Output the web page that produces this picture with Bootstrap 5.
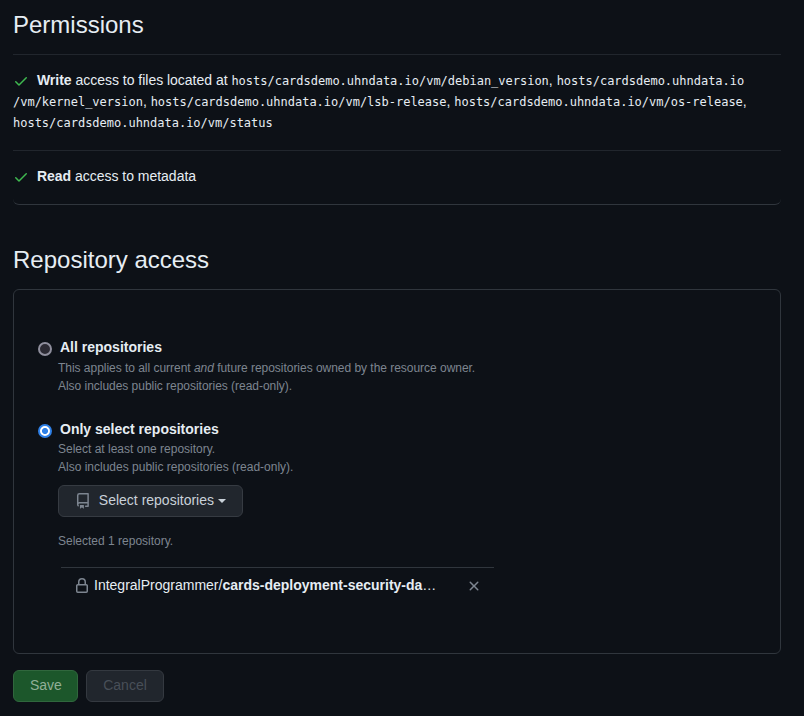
<!DOCTYPE html>
<html lang="en" data-bs-theme="dark">
<head>
<meta charset="utf-8">
<meta name="viewport" content="width=device-width, initial-scale=1">
<title>Permissions</title>
<link href="https://cdn.jsdelivr.net/npm/bootstrap@5.3.0/dist/css/bootstrap.min.css" rel="stylesheet">
<style>
  body { background: #0d1117; color: #e6edf3; font: 14px/21px "Liberation Sans", Arial, sans-serif; overflow: hidden; }
  .page { width: 768px; margin-left: 13px; padding-top: 7px; }
  .page h2 { font-size: 24px; line-height: 36px; font-weight: 400; margin: 0; color: #e6edf3; }
  .perm-list { margin-top: 11px; border-bottom: 1px solid #30363d; border-radius: 0 0 6px 6px; }
  .perm-item { border-top: 1px solid #21262d; padding: 15px 0 17px; }
  .perm-item code { font: 12px/12px "DejaVu Sans Mono", monospace; letter-spacing: -.01px; color: #e6edf3; }
  .perm-item svg { fill: #3fb950; margin: -2px 4px -2px 0; vertical-align: -2px; }
  .perm-item b, .choice-label, .repo-row b { font-weight: 700; }
  .perm-item b + span { letter-spacing: -.02px; }
  .access-heading { padding-top: 37px; }
  .access-box { height: 365px; margin-top: 11px; border: 1px solid #30363d; border-radius: 6px; padding: 47px 24px 0; }
  .choice .form-check-input { width: 14px; height: 14px; margin: 5px 8px 0 0; float: none; flex: none; background: #2b2a33; border: 2px solid #8f8f9d; box-shadow: none; }
  .choice .form-check-input:checked { border-color: #2f81e8; background: radial-gradient(circle, #2f81e8 0 2.7px, #fff 3.3px); }
  .note { color: #7d8590; font-size: 12px; line-height: 18px; margin: 0; }
  .note-scope { letter-spacing: -.03px; }
  .choice-body { padding-left: 20px; }
  .choice:first-child .choice-body { padding-top: 1px; }
  .choice + .choice { margin-top: 24px; }
  .btn.act { font-size: 14px; line-height: 20px; height: 32px; border-radius: 6px; padding: 4px 16px 6px; --bs-btn-disabled-opacity: 1; }
  .btn-pick { width: 185px; color: #c9d1d9; background: #21262d; border-color: #363b42; margin: 9px 0 15px; }
  .btn-pick::after { margin: 2px 0 0 4px; border-top-width: 4px; border-right-width: 4px; border-left-width: 4px; vertical-align: 0; }
  .btn-pick svg { fill: #7d8590; margin: 2px 8px 0 0; }
  .repo-list { width: 433px; margin: 17px 0 0 3px; border-top: 1px solid #30363d; padding: 7px 12px 0 13px; }
  .repo-row { height: 21px; }
  .repo-row svg { fill: #7d8590; flex: none; }
  .repo-name { width: 342px; margin-left: 4px; }
  .btn-save.act:disabled { width: 65px; background: #1c572b; border-color: #30673d; color: #91af97; }
  .btn-cancel.act:disabled { width: 78px; background: #21262d; border-color: #343940; color: #484f58; }
</style>
<script src="https://cdn.jsdelivr.net/npm/bootstrap@5.3.0/dist/js/bootstrap.bundle.min.js"></script>
</head>
<body>
<main class="page">
  <h2>Permissions</h2>
  <ul class="perm-list list-unstyled mb-0">
    <li class="perm-item"><svg width="16" height="16" viewBox="0 0 16 16"><path d="M13.78 4.22a.75.75 0 0 1 0 1.06l-7.25 7.25a.75.75 0 0 1-1.06 0L2.22 9.28a.75.75 0 0 1 1.06-1.06L6 10.94l6.72-6.72a.75.75 0 0 1 1.06 0Z"/></svg> <b>Write</b><span> access to files located at </span><code>hosts/cardsdemo.uhndata.io/vm/debian_version</code>, <code>hosts/cardsdemo.uhndata.io<br>/vm/kernel_version</code>, <code>hosts/cardsdemo.uhndata.io/vm/lsb-release</code>, <code>hosts/cardsdemo.uhndata.io/vm/os-release</code>,<br><code>hosts/cardsdemo.uhndata.io/vm/status</code></li>
    <li class="perm-item"><svg width="16" height="16" viewBox="0 0 16 16"><path d="M13.78 4.22a.75.75 0 0 1 0 1.06l-7.25 7.25a.75.75 0 0 1-1.06 0L2.22 9.28a.75.75 0 0 1 1.06-1.06L6 10.94l6.72-6.72a.75.75 0 0 1 1.06 0Z"/></svg> <b>Read</b><span> access to metadata</span></li>
  </ul>

  <h2 class="access-heading">Repository access</h2>
  <section class="access-box">
    <div class="choice">
      <div class="d-flex">
        <input class="form-check-input" type="radio" name="scope" id="scope-all">
        <label class="choice-label" for="scope-all">All repositories</label>
      </div>
      <div class="choice-body">
        <p class="note note-scope">This applies to all current <em>and</em> future repositories owned by the resource owner.<br>Also includes public repositories (read-only).</p>
      </div>
    </div>
    <div class="choice">
      <div class="d-flex">
        <input class="form-check-input" type="radio" name="scope" id="scope-some" checked>
        <label class="choice-label" for="scope-some">Only select repositories</label>
      </div>
      <div class="choice-body">
        <p class="note">Select at least one repository.<br>Also includes public repositories (read-only).</p>
        <button type="button" class="btn act btn-pick dropdown-toggle d-flex align-items-center"><svg width="16" height="16" viewBox="0 0 16 16"><path d="M2 2.5A2.5 2.5 0 0 1 4.5 0h8.75a.75.75 0 0 1 .75.75v12.5a.75.75 0 0 1-.75.75h-2.5a.75.75 0 0 1 0-1.5h1.75v-2h-8a1 1 0 0 0-.714 1.7.75.75 0 1 1-1.072 1.05A2.495 2.495 0 0 1 2 11.5Zm10.5-1h-8a1 1 0 0 0-1 1v6.708A2.486 2.486 0 0 1 4.5 9h8ZM5 12.25a.25.25 0 0 1 .25-.25h3.5a.25.25 0 0 1 .25.25v3.25a.25.25 0 0 1-.4.2l-1.45-1.087a.249.249 0 0 0-.3 0L5.4 15.7a.25.25 0 0 1-.4-.2Z"/></svg>Select repositories</button>
        <p class="note">Selected 1 repository.</p>
        <div class="repo-list">
          <div class="repo-row d-flex align-items-center">
            <svg width="16" height="16" viewBox="0 0 16 16"><path d="M4 4a4 4 0 0 1 8 0v2h.25c.966 0 1.75.784 1.75 1.75v5.5A1.75 1.75 0 0 1 12.25 15h-8.5A1.75 1.75 0 0 1 2 13.25v-5.5C2 6.784 2.784 6 3.75 6H4Zm8.25 3.5h-8.5a.25.25 0 0 0-.25.25v5.5c0 .138.112.25.25.25h8.5a.25.25 0 0 0 .25-.25v-5.5a.25.25 0 0 0-.25-.25ZM10.5 6V4a2.5 2.5 0 1 0-5 0v2Z"/></svg>
            <span class="repo-name text-nowrap">IntegralProgrammer/<b>cards-deployment-security-da</b>…</span>
            <svg class="ms-auto" width="16" height="16" viewBox="0 0 16 16"><path d="M3.72 3.72a.75.75 0 0 1 1.06 0L8 6.94l3.22-3.22a.75.75 0 1 1 1.06 1.06L9.06 8l3.22 3.22a.75.75 0 1 1-1.06 1.06L8 9.06l-3.22 3.22a.75.75 0 0 1-1.06-1.06L6.94 8 3.72 4.78a.75.75 0 0 1 0-1.06Z"/></svg>
          </div>
        </div>
      </div>
    </div>
  </section>
  <div class="d-flex gap-2 mt-3">
    <button type="button" class="btn act btn-save" disabled>Save</button>
    <button type="button" class="btn act btn-cancel" disabled>Cancel</button>
  </div>
</main>
</body>
</html>
